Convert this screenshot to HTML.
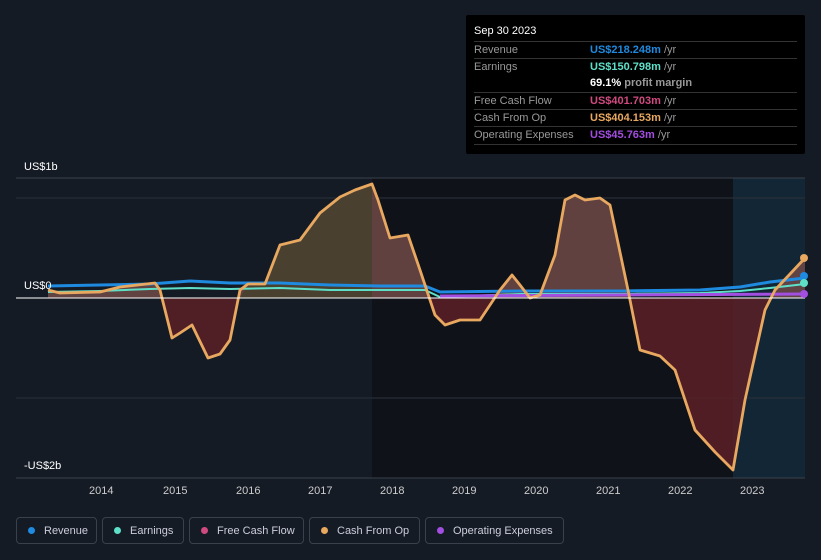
<!DOCTYPE html>
<html><head><style>
body{margin:0;background:#151b24;width:821px;height:560px;overflow:hidden;font-family:"Liberation Sans",sans-serif;position:relative}
.tt{position:absolute;left:466px;top:15px;width:339px;height:139px;background:#000;border-radius:2px;font-size:11px;color:#999}
.tt .h{color:#fff;padding:10px 8px 0 8px;height:16px}
.row{position:absolute;left:8px;right:8px;border-top:1px solid #333;height:17px;line-height:17px}
.row span.v{position:absolute;left:116px;font-weight:bold}
.leg{position:absolute;top:517px;height:27px;border:1px solid #3a414c;border-radius:4px;color:#ccd;font-size:11px;line-height:27px;box-sizing:border-box}
.leg i{display:inline-block;width:7px;height:7px;border-radius:50%;margin:0 9px 0 11px}
.ax{position:absolute;color:#fff;font-size:11px}
</style></head><body>
<svg width="821" height="560" style="position:absolute;left:0;top:0">
<defs>
<clipPath id="pos"><rect x="0" y="0" width="821" height="298"/></clipPath>
<clipPath id="neg"><rect x="0" y="298" width="821" height="200"/></clipPath>
<path id="cf" d="M48,290 L60,293 L100,292 L120,287 L155,283 L160,290 L172,338 L180,333 L192,325 L208,358 L220,354 L230,340 L240,290 L248,284 L265,284 L280,245 L300,240 L320,213 L340,197 L355,190 L372,184 L378,200 L390,238 L408,235 L420,270 L435,315 L445,325 L460,320 L480,320 L500,290 L512,275 L520,285 L530,298 L540,295 L555,255 L565,200 L575,195 L585,200 L600,198 L610,205 L628,290 L640,350 L660,356 L675,370 L695,430 L715,452 L733,470 L745,400 L765,310 L775,290 L805,258"/>
</defs>
<rect x="733" y="178" width="72" height="300" fill="#122636"/>
<rect x="372" y="178" width="361" height="300" fill="#0f1218"/>
<line x1="16" y1="178" x2="805" y2="178" stroke="#3a414c"/>
<line x1="16" y1="198" x2="805" y2="198" stroke="#2c323b"/>
<line x1="16" y1="398" x2="805" y2="398" stroke="#2c323b"/>
<line x1="16" y1="478" x2="805" y2="478" stroke="#3a414c"/>
<path clip-path="url(#neg)" d="M48,290 L60,293 L100,292 L120,287 L155,283 L160,290 L172,338 L180,333 L192,325 L208,358 L220,354 L230,340 L240,290 L248,284 L265,284 L280,245 L300,240 L320,213 L340,197 L355,190 L372,184 L378,200 L390,238 L408,235 L420,270 L435,315 L445,325 L460,320 L480,320 L500,290 L512,275 L520,285 L530,298 L540,295 L555,255 L565,200 L575,195 L585,200 L600,198 L610,205 L628,290 L640,350 L660,356 L675,370 L695,430 L715,452 L733,470 L745,400 L765,310 L775,290 L805,258 L805,298 L48,298Z" fill="#5a2026" fill-opacity=".85"/>
<path clip-path="url(#pos)" d="M48,290 L60,293 L100,292 L120,287 L155,283 L160,290 L172,338 L180,333 L192,325 L208,358 L220,354 L230,340 L240,290 L248,284 L265,284 L280,245 L300,240 L320,213 L340,197 L355,190 L372,184 L378,200 L390,238 L408,235 L420,270 L435,315 L445,325 L460,320 L480,320 L500,290 L512,275 L520,285 L530,298 L540,295 L555,255 L565,200 L575,195 L585,200 L600,198 L610,205 L628,290 L640,350 L660,356 L675,370 L695,430 L715,452 L733,470 L745,400 L765,310 L775,290 L805,258 L805,298 L48,298Z" fill="#6e4a48" fill-opacity=".85"/>
<path d="M240,298 L248,284 L265,284 L280,245 L300,240 L320,213 L340,197 L355,190 L372,184 L372,298Z" fill="#4a4030"/>
<path d="M48,286 L100,285 L150,284 L190,281 L230,283 L280,283 L330,285 L380,286 L425,286 L440,292 L520,291 L620,291 L700,290 L740,287 L770,282 L805,278" fill="none" stroke="#1e8ae0" stroke-width="3"/>
<path d="M48,292 L100,291 L150,289 L190,288 L230,289 L280,288 L330,290 L380,290 L425,290 L440,297 L520,294 L620,294 L700,293 L740,291 L770,288 L805,284" fill="none" stroke="#5ee0c8" stroke-width="2"/>
<path d="M440,296 L805,294" fill="none" stroke="#a24ee0" stroke-width="3"/>
<use href="#cf" fill="none" stroke="#e8a860" stroke-width="2.8" stroke-linejoin="round"/>
<line x1="16" y1="298" x2="805" y2="298" stroke="#fff" stroke-width="1"/>
<circle cx="804" cy="258" r="4" fill="#e8a860"/><circle cx="804" cy="276" r="4" fill="#1e8ae0"/><circle cx="804" cy="283" r="4" fill="#5ee0c8"/><circle cx="804" cy="294" r="4" fill="#a24ee0"/>
</svg>
<div class="ax" style="left:24px;top:161px">US$1b</div>
<div class="ax" style="left:24px;top:280px">US$0</div>
<div class="ax" style="left:24px;top:460px">-US$2b</div>
<div class="ax" style="left:89px;top:485px;color:#ccc">2014</div>
<div class="ax" style="left:163px;top:485px;color:#ccc">2015</div>
<div class="ax" style="left:236px;top:485px;color:#ccc">2016</div>
<div class="ax" style="left:308px;top:485px;color:#ccc">2017</div>
<div class="ax" style="left:380px;top:485px;color:#ccc">2018</div>
<div class="ax" style="left:452px;top:485px;color:#ccc">2019</div>
<div class="ax" style="left:524px;top:485px;color:#ccc">2020</div>
<div class="ax" style="left:596px;top:485px;color:#ccc">2021</div>
<div class="ax" style="left:668px;top:485px;color:#ccc">2022</div>
<div class="ax" style="left:740px;top:485px;color:#ccc">2023</div>
<div class="tt"><div class="h">Sep 30 2023</div>
<div class="row" style="top:26px">Revenue<span class="v" style="color:#1e8ae0">US$218.248m <span style="color:#999;font-weight:normal">/yr</span></span></div>
<div class="row" style="top:43px">Earnings<span class="v" style="color:#5ee0c8">US$150.798m <span style="color:#999;font-weight:normal">/yr</span></span></div>
<div class="row" style="top:60px;border:none"><span class="v" style="color:#fff">69.1% <span style="color:#999">profit margin</span></span></div>
<div class="row" style="top:77px">Free Cash Flow<span class="v" style="color:#d04a80">US$401.703m <span style="color:#999;font-weight:normal">/yr</span></span></div>
<div class="row" style="top:94px">Cash From Op<span class="v" style="color:#e8a860">US$404.153m <span style="color:#999;font-weight:normal">/yr</span></span></div>
<div class="row" style="top:111px;border-bottom:1px solid #333">Operating Expenses<span class="v" style="color:#a24ee0">US$45.763m <span style="color:#999;font-weight:normal">/yr</span></span></div>
</div>
<div class="leg" style="left:16px;width:81px"><i style="background:#1e8ae0"></i>Revenue</div>
<div class="leg" style="left:102px;width:82px"><i style="background:#5ee0c8"></i>Earnings</div>
<div class="leg" style="left:189px;width:115px"><i style="background:#d04a80"></i>Free Cash Flow</div>
<div class="leg" style="left:309px;width:111px"><i style="background:#e8a860"></i>Cash From Op</div>
<div class="leg" style="left:425px;width:139px"><i style="background:#a24ee0"></i>Operating Expenses</div>
</body></html>
